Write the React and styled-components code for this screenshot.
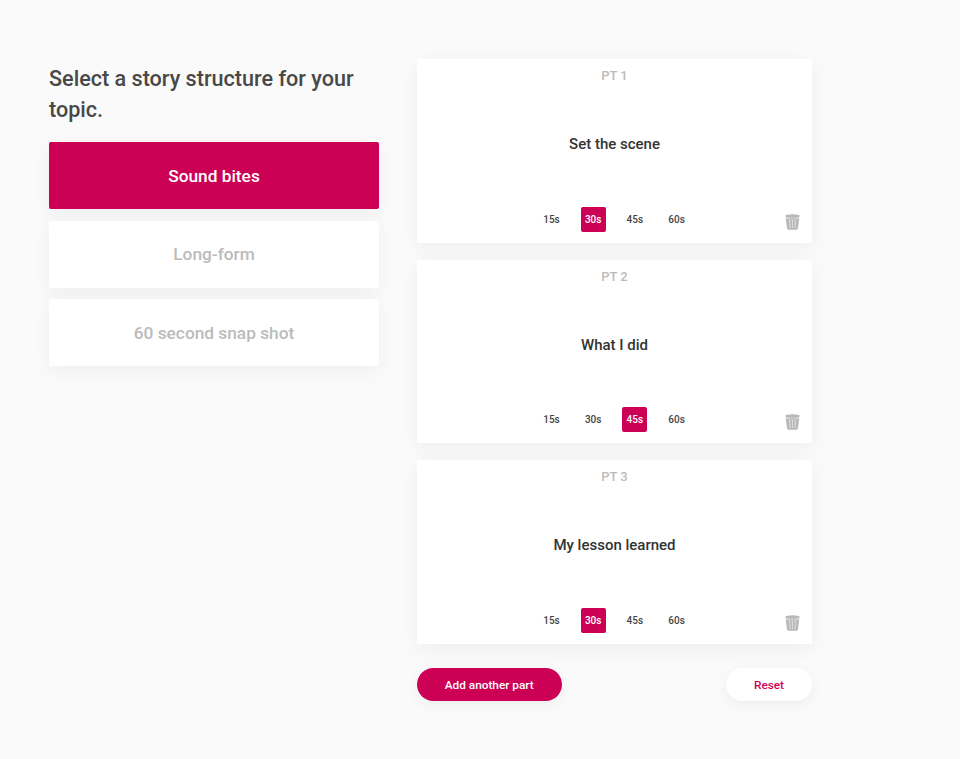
import React from "react"
import styled, { createGlobalStyle } from "styled-components"

const pink = "#cc0055"

const GlobalStyle = createGlobalStyle`
  html, body {
    margin: 0;
    padding: 0;
    background: #fafafa;
    font-family: Roboto, "Liberation Sans", sans-serif;
  }
`

const Page = styled.div`
  display: flex;
  align-items: flex-start;
  gap: 38px;
  width: 960px;
  height: 759px;
  box-sizing: border-box;
  padding: 59px 0 0 49px;
  overflow: hidden;
`

const LeftColumn = styled.div`
  width: 330px;
  display: flex;
  flex-direction: column;
`

const Heading = styled.h1`
  margin: 4px 0 17px;
  font-size: 21.6px;
  line-height: 31px;
  font-weight: 500;
  color: #484848;
`

const Options = styled.div`
  display: flex;
  flex-direction: column;
  gap: 11.5px;
`

const Option = styled.div`
  height: 67px;
  display: flex;
  align-items: center;
  justify-content: center;
  border-radius: 2px;
  font-size: 17.3px;
  font-weight: 500;
  color: ${p => (p.$active ? "#fff" : "#bbb")};
  background: ${p => (p.$active ? pink : "#fff")};
  box-shadow: 0 5px 20px rgba(0, 0, 0, 0.05);
`

const RightColumn = styled.div`
  width: 395px;
  display: flex;
  flex-direction: column;
`

const Parts = styled.div`
  display: flex;
  flex-direction: column;
  gap: 17px;
`

const PartCard = styled.div`
  height: 183.5px;
  box-sizing: border-box;
  padding-top: 9px;
  background: #fff;
  display: flex;
  flex-direction: column;
  align-items: center;
  box-shadow: 0 5px 20px rgba(0, 0, 0, 0.05);
`

const PartLabel = styled.div`
  font-size: 13px;
  line-height: 15px;
  font-weight: 500;
  color: #bbb;
`

const PartTitle = styled.div`
  margin-top: 52px;
  font-size: 15px;
  line-height: 18px;
  font-weight: 500;
  color: #333;
`

const Footer = styled.div`
  width: 100%;
  box-sizing: border-box;
  margin-top: 53.5px;
  display: flex;
  align-items: center;
  justify-content: space-between;
  padding: 0 12px 0 0;
`

const Times = styled.div`
  margin-left: 122px;
  display: flex;
  gap: 16.7px;
`

const Time = styled.div`
  width: 25px;
  height: 25px;
  display: flex;
  align-items: center;
  justify-content: center;
  border-radius: 2px;
  font-size: 10px;
  font-weight: 500;
  color: ${p => (p.$active ? "#fff" : "#444")};
  background: ${p => (p.$active ? pink : "transparent")};
`

const TrashButton = styled.div`
  display: flex;
  margin-top: 5px;
`

const Actions = styled.div`
  margin-top: 24.5px;
  display: flex;
  justify-content: space-between;
`

const Pill = styled.div`
  height: 33px;
  width: ${p => p.$width}px;
  display: flex;
  align-items: center;
  justify-content: center;
  border-radius: 17px;
  font-size: 11.8px;
  font-weight: 500;
  color: ${p => (p.$primary ? "#fff" : pink)};
  background: ${p => (p.$primary ? pink : "#fff")};
  box-shadow: 0 4px 14px rgba(0, 0, 0, 0.05);
`

const TrashIcon = () => (
  <svg width="15" height="16" viewBox="0 0 15 16">
    <ellipse cx="7.5" cy="2" rx="7.3" ry="1.7" fill="#b9b9b9" />
    <path d="M.6 3.4h13.8L13 14.2c-.2 1.1-1 1.6-2 1.6H4c-1 0-1.8-.5-2-1.6z" fill="#b9b9b9" />
    <path d="M1.2 4.3c3 1 9.600 1 12.600 0" stroke="#e6e6e6" strokeWidth=".7" fill="none" />
    <path d="M4.600 6l.4 8M7.500 6v8M10.400 6l-.4 8" stroke="#e0e0e0" strokeWidth=".9" fill="none" />
  </svg>
)

const options = ["Sound bites", "Long-form", "60 second snap shot"]

const parts = [
  { label: "PT 1", title: "Set the scene", active: "30s" },
  { label: "PT 2", title: "What I did", active: "45s" },
  { label: "PT 3", title: "My lesson learned", active: "30s" },
]

const times = ["15s", "30s", "45s", "60s"]

const App = () => {
  return (
    <Page>
      <GlobalStyle />
      <LeftColumn>
        <Heading>Select a story structure for your topic.</Heading>
        <Options>
          {options.map((o, i) => (
            <Option key={o} $active={i === 0}>{o}</Option>
          ))}
        </Options>
      </LeftColumn>
      <RightColumn>
        <Parts>
          {parts.map(part => (
            <PartCard key={part.label}>
              <PartLabel>{part.label}</PartLabel>
              <PartTitle>{part.title}</PartTitle>
              <Footer>
                <Times>
                  {times.map(t => (
                    <Time key={t} $active={t === part.active}>{t}</Time>
                  ))}
                </Times>
                <TrashButton><TrashIcon /></TrashButton>
              </Footer>
            </PartCard>
          ))}
        </Parts>
        <Actions>
          <Pill $primary $width={144.5}>Add another part</Pill>
          <Pill $width={86}>Reset</Pill>
        </Actions>
      </RightColumn>
    </Page>
  )
}

export default App
